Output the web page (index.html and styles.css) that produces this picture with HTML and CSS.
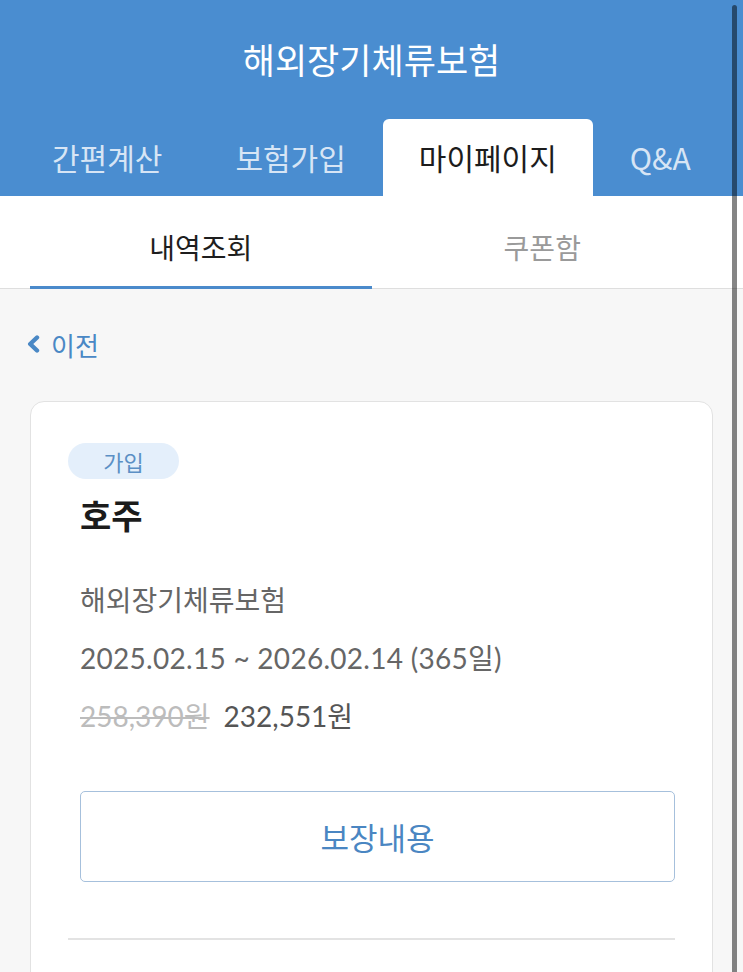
FILE: index.html
```html
<!DOCTYPE html>
<html lang="ko">
<head>
<meta charset="utf-8">
<title>해외장기체류보험</title>
<link rel="stylesheet" href="styles.css">
</head>
<body>
<div class="page">
  <header class="header">
    <h1 class="title">해외장기체류보험</h1>
    <nav class="tabs">
      <div class="tab">간편계산</div>
      <div class="tab">보험가입</div>
      <div class="tab active">마이페이지</div>
      <div class="tab">Q&amp;A</div>
    </nav>
  </header>
  <div class="subtabs">
    <div class="subtab active">내역조회</div>
    <div class="subtab">쿠폰함</div>
  </div>
  <main class="content">
    <a class="back">
      <svg class="chev" width="14" height="22" viewBox="0 0 14 22"><path d="M11 4.5 L4.2 11 L11 17.5" fill="none" stroke="#4a88c5" stroke-width="4.4" stroke-linecap="round" stroke-linejoin="round"/></svg>
      <span>이전</span>
    </a>
    <section class="card">
      <span class="badge">가입</span>
      <h2 class="country">호주</h2>
      <div class="info">
        <p class="line">해외장기체류보험</p>
        <p class="line date">2025.02.15 ~ 2026.02.14 (365일)</p>
        <p class="line price"><span class="old">258,390원</span><span class="new">232,551원</span></p>
      </div>
      <button class="btn">보장내용</button>
      <hr class="divider">
    </section>
  </main>
  <div class="scroll"></div>
</div>
</body>
</html>
```
FILE: styles.css
```css
* { box-sizing: border-box; }
html, body { margin: 0; padding: 0; }
body {
  background: #f7f7f7;
  font-family: "Noto Sans CJK KR", "Noto Sans", sans-serif;
  width: 743px;
  height: 972px;
  overflow: hidden;
}
.page { position: relative; height: 972px; }
.header { background: #4a8dd0; }
.title {
  margin: 0;
  height: 119px;
  display: flex;
  align-items: center;
  justify-content: center;
  color: #fff;
  font-size: 35px;
  font-weight: 400;
  padding-bottom: 2px;
}
.tabs {
  display: flex;
  gap: 1px;
  padding-left: 16px;
  height: 77px;
}
.tab {
  padding: 0 36px;
  font-size: 30px;
  line-height: 77px;
  color: #d7e5f5;
  border-radius: 6px 6px 0 0;
  white-space: nowrap;
}
.tab.active { background: #fff; color: #1c1c1c; }
.subtabs {
  display: flex;
  background: #fff;
  padding: 0 30px;
  border-bottom: 1px solid #dedede;
}
.subtab {
  flex: 1;
  text-align: center;
  font-size: 28px;
  padding-top: 12px;
  line-height: 78px;
  color: #9a9a9a;
  border-bottom: 3px solid transparent;
  margin-bottom: -1px;
}
.subtab.active { color: #1e1e1e; border-bottom-color: #4a8acb; }
.content { padding: 35px 30px 0; }
.back {
  display: flex;
  align-items: center;
  gap: 11px;
  height: 40px;
  color: #4a88c5;
  font-size: 26px;
  margin-left: -4px;
}
.chev { display: block; }
.card {
  margin-top: 37px;
  background: #fff;
  border: 1px solid #e2e2e2;
  border-radius: 14px;
  padding: 41px 37px 60px;
}
.badge {
  display: inline-block;
  width: 111px;
  height: 36px;
  line-height: 36px;
  text-align: center;
  border-radius: 18px;
  background: #e4effb;
  color: #5b8fc5;
  font-size: 22px;
}
.country {
  margin: 16px 0 0 12px;
  font-size: 34px;
  line-height: 40px;
  font-weight: 700;
  color: #1b1b1b;
}
.info { margin: 36px 0 0 12px; }
.line {
  margin: 0;
  font-family: Lato, "Noto Sans CJK KR", sans-serif;
  font-size: 28px;
  line-height: 58px;
  color: #666;
}
.date { letter-spacing: 0.28px; }
.price { display: flex; gap: 14px; }
.old { color: #bcbcbc; text-decoration: line-through; text-decoration-thickness: 1.5px; }
.new { color: #555; }
.btn {
  display: block;
  margin: 46px 0 0 12px;
  width: calc(100% - 12px);
  height: 91px;
  background: #fff;
  border: 1.5px solid #a6c0dc;
  border-radius: 5px;
  color: #4a86c2;
  font-family: "Noto Sans CJK KR", sans-serif;
  font-size: 31px;
}
.divider {
  margin: 56px 0 0;
  border: 0;
  border-top: 2px solid #e3e3e3;
}
.scroll {
  position: absolute;
  top: 5px;
  right: 6px;
  width: 5px;
  height: 980px;
  border-radius: 3px;
  background: rgba(0, 0, 0, 0.48);
}
```
